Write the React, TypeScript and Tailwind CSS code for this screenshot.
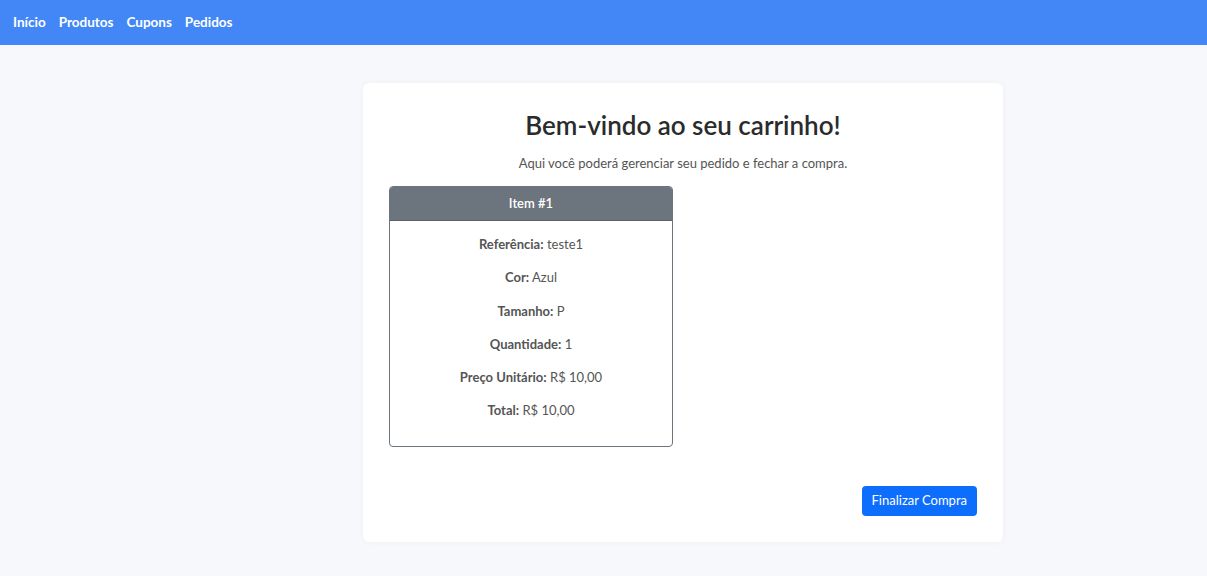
import React from 'react'

const rows: [string, string][] = [
  ['Referência:', 'teste1'],
  ['Cor:', 'Azul'],
  ['Tamanho:', 'P'],
  ['Quantidade:', '1'],
  ['Preço Unitário:', 'R$ 10,00'],
  ['Total:', 'R$ 10,00'],
]

export default function App() {
  return (
    <div className="min-h-screen bg-[#f7f8fc] font-['Lato',sans-serif]">
      <nav className="h-[45px] bg-[#4287f5] flex items-center gap-[13px] px-[13px]">
        {['Início', 'Produtos', 'Cupons', 'Pedidos'].map((l) => (
          <a key={l} className="text-white font-bold text-[13.5px]">
            {l}
          </a>
        ))}
      </nav>

      <div className="flex pl-[363px] pt-[38px]">
        <div className="w-[640px] bg-white rounded-md shadow-[0_0_6px_rgba(0,0,0,0.04)] px-[26px] pt-[24px] pb-[26px]">
          <h2 className="text-center text-[26px] font-semibold text-[#2b2b2b] leading-[36px]">
            Bem-vindo ao seu carrinho!
          </h2>
          <p className="text-center text-[13px] text-[#555] mt-[10px] leading-[20px]">
            Aqui você poderá gerenciar seu pedido e fechar a compra.
          </p>

          <div className="w-[284px] mt-[13px] border border-[#6c757d] rounded-[4px] overflow-hidden">
            <div className="h-[34px] bg-[#6c757d] text-white text-[13px] font-semibold flex items-center justify-center border-b border-[#5a6268]">
              Item #1
            </div>
            <div className="flex flex-col items-center gap-[14px] pt-[14px] pb-[25px] text-[13px] text-[#555]">
              {rows.map(([k, v]) => (
                <p key={k} className="leading-[19.3px]">
                  <span className="font-bold">{k}</span> {v}
                </p>
              ))}
            </div>
          </div>

          <div className="flex justify-end mt-[39px]">
            <button className="h-[30px] px-[10px] bg-[#0d6efd] text-white text-[13px] rounded-[4px]">
              Finalizar Compra
            </button>
          </div>
        </div>
      </div>
    </div>
  )
}
